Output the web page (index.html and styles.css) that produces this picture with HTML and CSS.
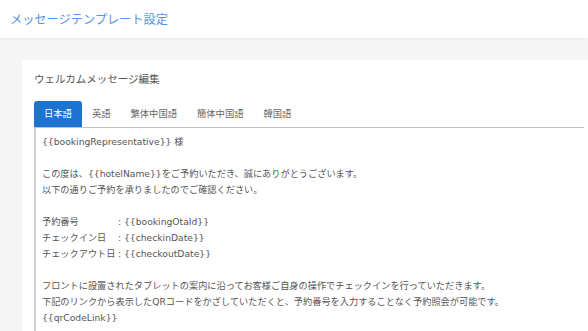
FILE: index.html
```html
<!DOCTYPE html>
<html lang="ja">
<head>
  <meta charset="UTF-8">
  <meta name="viewport" content="width=device-width, initial-scale=1.0">
  <title>メッセージテンプレート設定</title>
  <link rel="stylesheet" href="styles.css">
</head>
<body>
  <!-- ヘッダー -->
  <header class="page-header">
    <h1 class="page-title">メッセージテンプレート設定</h1>
  </header>

  <main class="page-body">
    <!-- ウェルカムメッセージ -->
    <section class="card">
      <h2 class="card-title">ウェルカムメッセージ編集</h2>

      <ul class="tabs">
        <li class="tab active">日本語</li>
        <li class="tab">英語</li>
        <li class="tab">繁体中国語</li>
        <li class="tab">簡体中国語</li>
        <li class="tab">韓国語</li>
      </ul>

      <div class="editor">
        <p>{{bookingRepresentative}} 様</p>
        <p class="blank"></p>
        <p>この度は、{{hotelName}}をご予約いただき、誠にありがとうございます。</p>
        <p>以下の通りご予約を承りましたのでご確認ください。</p>
        <p class="blank"></p>
        <p><span class="label">予約番号</span>: {{bookingOtaId}}</p>
        <p><span class="label">チェックイン日</span>: {{checkinDate}}</p>
        <p><span class="label">チェックアウト日</span>: {{checkoutDate}}</p>
        <p class="blank"></p>
        <p>フロントに設置されたタブレットの案内に沿ってお客様ご自身の操作でチェックインを行っていただきます。</p>
        <p>下記のリンクから表示したQRコードをかざしていただくと、予約番号を入力することなく予約照会が可能です。</p>
        <p>{{qrCodeLink}}</p>
      </div>
    </section>
  </main>
</body>
</html>
```

FILE: styles.css
```css
/* ページ全体 */
body {
  margin: 0;
  background-color: #f5f5f5;
  font-family: 'Open Sans', 'Noto Sans CJK JP', sans-serif;
  color: #595959;
  overflow: hidden;
}

/* ヘッダー */
.page-header {
  height: 38px;
  background-color: #fff;
  box-shadow: 0 1px 3px rgba(0, 0, 0, 0.06);
  display: flex;
  align-items: center;
  padding-left: 10px;
}

.page-title {
  margin: 0;
  font-size: 12.2px;
  font-weight: normal;
  color: #4f96e6;
}

.page-body {
  padding: 22px 0 0 22px;
}

/* カード */
.card {
  box-sizing: border-box;
  width: 574px;
  background-color: #fff;
  padding: 12px 12px 0 12px;
}

.card-title {
  margin: 0 0 14px 0;
  font-size: 10.5px;
  line-height: 15px;
  font-weight: normal;
  color: #555;
}

/* タブ */
.tabs {
  display: flex;
  margin: 0;
  padding: 0;
  list-style: none;
  border-bottom: 1px solid #c2c2c2;
}

.tab {
  height: 26px;
  line-height: 26px;
  padding: 0 10px;
  font-size: 9.3px;
  color: #666;
  border-radius: 3px 3px 0 0;
}

.tab.active {
  background-color: #1d74d0;
  color: #fff;
}

/* 本文 */
.editor {
  border-left: 2px solid #cfcfcf;
  padding: 6px 6px 20px 6px;
  font-family: 'DejaVu Sans', 'Noto Sans CJK JP', sans-serif;
  font-size: 9.2px;
  line-height: 16px;
  color: #555;
}

.editor p {
  margin: 0;
  white-space: nowrap;
}

.editor .blank {
  height: 16px;
}

.editor .label {
  display: inline-block;
  width: 76px;
}
```
